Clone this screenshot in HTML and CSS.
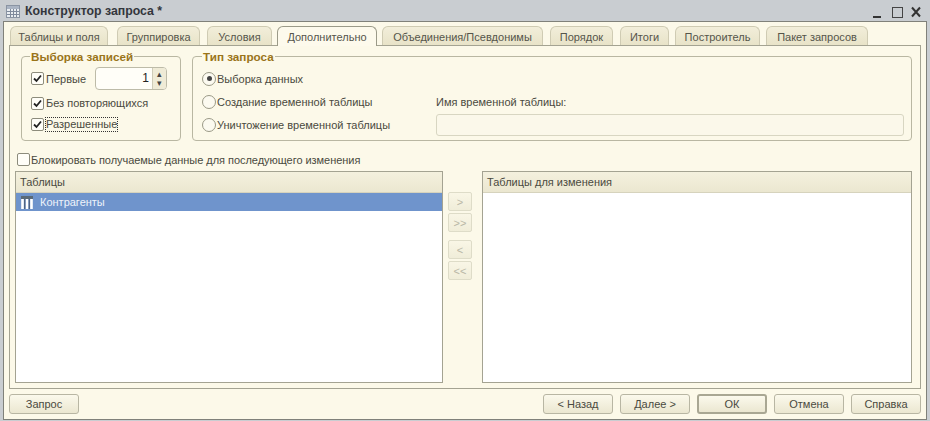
FILE: index.html
```html
<!DOCTYPE html>
<html lang="ru">
<head>
<meta charset="utf-8">
<title>Конструктор запроса</title>
<link rel="stylesheet" href="styles.css">
</head>
<body>
<div class="window">
  <header class="titlebar">
    <svg class="app-icon" width="16" height="15" viewBox="0 0 16 15"><rect x="1.5" y="1.5" width="13" height="12" fill="#e9edf1" stroke="#8a94a3"/><rect x="2" y="2" width="12" height="3" fill="#aab4c3"/><path d="M5.5 5v8M8.5 5v8M11.5 5v8M2 7.5h12M2 10.5h12" stroke="#7f8a9c"/></svg>
    <span class="title">Конструктор запроса *</span>
    <div class="winbtns">
      <svg width="60" height="16" viewBox="0 0 60 16"><path d="M6 13h8" stroke="#333" stroke-width="2"/><rect x="25.5" y="3.5" width="10" height="10" fill="none" stroke="#444"/><path d="M45 3.5l8 9M53 3.5l-8 9" stroke="#333" stroke-width="2"/></svg>
    </div>
  </header>
  <div class="client">
    <nav class="tabs">
      <div class="tab t1">Таблицы и поля</div>
      <div class="tab t2">Группировка</div>
      <div class="tab t3">Условия</div>
      <div class="tab active t4">Дополнительно</div>
      <div class="tab t5">Объединения/Псевдонимы</div>
      <div class="tab t6">Порядок</div>
      <div class="tab t7">Итоги</div>
      <div class="tab t8">Построитель</div>
      <div class="tab t9">Пакет запросов</div>
    </nav>
    <main class="panel">
      <div class="groups">
        <fieldset class="group records">
          <legend>Выборка записей</legend>
          <div class="row first-row">
            <label class="check"><span class="box checked"><svg width="11" height="11" viewBox="0 0 11 11"><path d="M2 5.5l2.5 2.5L9 2.5" fill="none" stroke="#222" stroke-width="1.8"/></svg></span>Первые</label>
            <div class="spin"><span class="spin-val">1</span><span class="spin-btns"><i>▴</i><i>▾</i></span></div>
          </div>
          <div class="row"><label class="check"><span class="box checked"><svg width="11" height="11" viewBox="0 0 11 11"><path d="M2 5.5l2.5 2.5L9 2.5" fill="none" stroke="#222" stroke-width="1.8"/></svg></span>Без повторяющихся</label></div>
          <div class="row tight"><label class="check"><span class="box checked"><svg width="11" height="11" viewBox="0 0 11 11"><path d="M2 5.5l2.5 2.5L9 2.5" fill="none" stroke="#222" stroke-width="1.8"/></svg></span><span class="focus">Разрешенные</span></label></div>
        </fieldset>
        <fieldset class="group type">
          <legend>Тип запроса</legend>
          <div class="type-cols">
            <div class="radios">
              <label class="radio"><span class="dot on"></span>Выборка данных</label>
              <label class="radio"><span class="dot"></span>Создание временной таблицы</label>
              <label class="radio"><span class="dot"></span>Уничтожение временной таблицы</label>
            </div>
            <div class="tempname">
              <div class="tempname-label">Имя временной таблицы:</div>
              <div class="input"></div>
            </div>
          </div>
        </fieldset>
      </div>
      <label class="check lock"><span class="box"></span>Блокировать получаемые данные для последующего изменения</label>
      <div class="lists">
        <section class="list">
          <div class="list-head">Таблицы</div>
          <div class="list-row selected">
            <svg width="12" height="13" viewBox="0 0 12 13"><rect x="0" y="0" width="12" height="3" fill="#5a6a78"/><path d="M1.5 3v10M6 3v10M10.5 3v10" stroke="#fff" stroke-width="2.6"/><path d="M3.75 3v10M8.25 3v10" stroke="#45536a" stroke-width="1"/></svg>
            <span>Контрагенты</span>
          </div>
        </section>
        <div class="movers">
          <div class="mover">&gt;</div>
          <div class="mover">&gt;&gt;</div>
          <div class="mover gap">&lt;</div>
          <div class="mover">&lt;&lt;</div>
        </div>
        <section class="list">
          <div class="list-head">Таблицы для изменения</div>
        </section>
      </div>
    </main>
    <footer class="actions">
      <button class="btn">Запрос</button>
      <div class="actions-right">
        <button class="btn">&lt; Назад</button>
        <button class="btn">Далее &gt;</button>
        <button class="btn default">ОК</button>
        <button class="btn">Отмена</button>
        <button class="btn">Справка</button>
      </div>
    </footer>
  </div>
</div>
</body>
</html>
```
FILE: styles.css
```css
* { box-sizing: border-box; }
html, body { margin: 0; padding: 0; }
body {
  width: 930px;
  height: 421px;
  overflow: hidden;
  background: #c9cdd1;
  font: 11px "Liberation Sans", Arial, sans-serif;
  color: #4a4a40;
}
.window { height: 421px; display: flex; flex-direction: column; padding: 0 3px 1px 3px; }
.titlebar { height: 21px; flex: none; display: flex; align-items: center; padding-top: 1px; }
.app-icon { margin-left: 2px; margin-right: 4px; }
.title { font-weight: bold; font-size: 12.3px; color: #33363c; }
.winbtns { margin-left: auto; display: flex; margin-top: 1px; }
.client {
  flex: 1;
  background: #fcf9e9;
  border: 1px solid #80817a;
  padding: 4px 5px 5px 5px;
  display: flex;
  flex-direction: column;
}
.tabs { display: flex; height: 19px; flex: none; position: relative; z-index: 1; padding-left: 1px; }
.tab {
  height: 19px;
  padding-top: 1px;
  background: linear-gradient(#f2eeda, #e8e3c8);
  border: 1px solid #cfcbb3;
  border-bottom: 0;
  border-radius: 6px 6px 0 0;
  display: flex;
  align-items: center;
  justify-content: center;
  color: #55554b;
}
.tab.active { background: #fdfaec; border-color: #9b9a88; height: 20px; }
.t1 { width: 98px; }
.t2 { width: 83px; margin-left: 9px; }
.t3 { width: 65px; margin-left: 7px; }
.t4 { width: 100px; margin-left: 5px; }
.t5 { width: 161px; margin-left: 5px; }
.t6 { width: 63px; margin-left: 7px; }
.t7 { width: 49px; margin-left: 7px; }
.t8 { width: 85px; margin-left: 6px; }
.t9 { width: 102px; margin-left: 6px; }
.panel {
  flex: 1;
  border: 1px solid #a4a392;
  background: #fcf9e9;
  padding: 0 8px 5px 5px;
  display: flex;
  flex-direction: column;
}
.groups { display: flex; gap: 11px; padding-left: 6px; height: 96px; flex: none; }
.group {
  margin: 0;
  min-width: 0;
  border: 1px solid #b9b7a2;
  border-radius: 4px;
  height: 91px;
  margin-top: 4px;
  padding: 0;
}
.group legend {
  padding: 0 1px;
  font-weight: bold;
  font-size: 11.7px;
  line-height: 13px;
  color: #9a7419;
}
.records legend { margin-left: -1px; }
.type legend { margin-left: 0; }
.records { width: 160px; padding: 0 0 0 9px; }
.type { flex: 1; padding: 0 7px 0 9px; }
.row { height: 24px; display: flex; align-items: center; }
.first-row { height: 25px; margin-top: 3px; }
.tight { margin-top: -3px; }
.check { display: flex; align-items: center; color: #4a4a40; }
.box {
  width: 13px;
  height: 13px;
  border: 1px solid #8d8c7c;
  border-radius: 2px;
  background: #fffef8;
  margin-right: 2px;
  display: flex;
  align-items: center;
  justify-content: center;
  flex: none;
}
.focus { border: 1px dotted #333; padding: 0 0 1px 0; margin-left: -1px; }
.spin {
  width: 72px;
  height: 23px;
  margin-left: 9px;
  background: #fffef8;
  border: 1px solid #bdbba8;
  border-radius: 4px;
  display: flex;
  font-size: 12px;
}
.spin-val { flex: 1; text-align: right; line-height: 20px; padding-right: 3px; color: #222; }
.spin-btns { width: 14px; border-left: 1px solid #cfccb8; border-radius: 0 3px 3px 0; background: #efebd6; display: flex; flex-direction: column; align-items: center; justify-content: center; }
.spin-btns i { font-style: normal; font-size: 9px; line-height: 9px; color: #444; }
.type-cols { display: flex; }
.radios { width: 234px; display: flex; flex-direction: column; padding-top: 4px; }
.radio { height: 23px; display: flex; align-items: center; }
.dot {
  width: 14px;
  height: 14px;
  border: 1px solid #9a9986;
  border-radius: 50%;
  background: #fcfaf0;
  margin-right: 1px;
  flex: none;
  display: flex;
  align-items: center;
  justify-content: center;
}
.dot.on::after { content: ""; width: 5px; height: 5px; border-radius: 50%; background: #444; }
.tempname { flex: 1; padding-top: 32px; }
.tempname-label { height: 15px; line-height: 15px; margin-bottom: 4px; }
.input { height: 22px; border: 1px solid #d8d6c2; border-radius: 3px; background: #fbf8ea; }
.lock { height: 13px; margin-top: 11px; margin-left: 2px; flex: none; letter-spacing: -0.04px; }
.lock .box { margin-right: 1px; }
.lists { flex: 1; display: flex; margin-top: 5px; min-height: 0; }
.list {
  background: #fff;
  border: 1px solid #a4a392;
  display: flex;
  flex-direction: column;
}
.list:first-child { width: 428px; }
.list:last-child { width: 430px; }
.list-head {
  height: 21px;
  flex: none;
  line-height: 20px;
  padding-left: 4px;
  background: linear-gradient(#f4f1de, #ebe7d0);
  border-bottom: 1px solid #d6d3bd;
}
.list-row { height: 18px; display: flex; align-items: center; padding-left: 5px; gap: 7px; }
.selected { background: #6f94cc; color: #eef3fa; }
.movers { width: 39px; flex: none; padding: 21px 10px 0 5px; display: flex; flex-direction: column; gap: 2px; }
.mover {
  height: 19px;
  border: 1px solid #dedcc8;
  border-radius: 2px;
  background: linear-gradient(#f9f6e6, #f0edd9);
  color: #b9b7a6;
  display: flex;
  align-items: center;
  justify-content: center;
}
.mover.gap { margin-top: 6px; }
.actions { display: flex; justify-content: space-between; flex: none; height: 20px; margin-top: 5px; }
.actions-right { display: flex; gap: 7px; }
.btn {
  width: 70px;
  height: 20px;
  padding: 0;
  font: inherit;
  color: #4a4a40;
  border: 1px solid #b8b6a3;
  border-radius: 3px;
  background: linear-gradient(#fbf9ec, #ebe7d1);
}
.btn.default { border: 2px solid #a9a793; }
```
